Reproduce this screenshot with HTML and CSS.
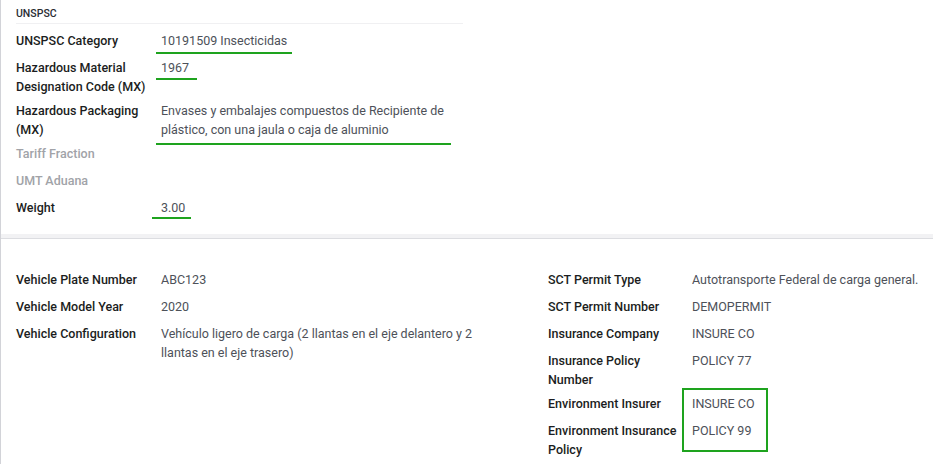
FILE: index.html
```html
<!DOCTYPE html>
<html lang="en">
<head>
<meta charset="utf-8">
<title>UNSPSC</title>
<link rel="stylesheet" href="styles.css">
</head>
<body>
<div class="sheet">
  <section class="panel panel-top">
    <div class="group">
      <div class="group-title">UNSPSC</div>
      <div class="rows">
        <div class="row">
          <div class="label">UNSPSC Category</div>
          <div class="value">10191509 Insecticidas<span class="hl hl-cat"></span></div>
        </div>
        <div class="row">
          <div class="label">Hazardous Material Designation Code (MX)</div>
          <div class="value">1967<span class="hl hl-code"></span></div>
        </div>
        <div class="row">
          <div class="label">Hazardous Packaging (MX)</div>
          <div class="value">Envases y embalajes compuestos de Recipiente de plástico, con una jaula o caja de aluminio<span class="hl hl-pack"></span></div>
        </div>
        <div class="row">
          <div class="label muted">Tariff Fraction</div>
          <div class="value"></div>
        </div>
        <div class="row">
          <div class="label muted">UMT Aduana</div>
          <div class="value"></div>
        </div>
        <div class="row">
          <div class="label">Weight</div>
          <div class="value">3.00<span class="hl hl-weight"></span></div>
        </div>
      </div>
    </div>
  </section>
  <div class="divider"></div>
  <section class="panel panel-bottom">
    <div class="cols">
      <div class="col col-left">
        <div class="row">
          <div class="label">Vehicle Plate Number</div>
          <div class="value">ABC123</div>
        </div>
        <div class="row">
          <div class="label">Vehicle Model Year</div>
          <div class="value">2020</div>
        </div>
        <div class="row">
          <div class="label">Vehicle Configuration</div>
          <div class="value">Vehículo ligero de carga (2 llantas en el eje delantero y 2 llantas en el eje trasero)</div>
        </div>
      </div>
      <div class="col col-right">
        <div class="row">
          <div class="label">SCT Permit Type</div>
          <div class="value nowrap">Autotransporte Federal de carga general.</div>
        </div>
        <div class="row">
          <div class="label">SCT Permit Number</div>
          <div class="value">DEMOPERMIT</div>
        </div>
        <div class="row">
          <div class="label">Insurance Company</div>
          <div class="value">INSURE CO</div>
        </div>
        <div class="row">
          <div class="label">Insurance Policy Number</div>
          <div class="value">POLICY 77</div>
        </div>
        <div class="row">
          <div class="label">Environment Insurer</div>
          <div class="value">INSURE CO</div>
        </div>
        <div class="row">
          <div class="label">Environment Insurance Policy</div>
          <div class="value">POLICY 99</div>
        </div>
        <div class="box"></div>
      </div>
    </div>
  </section>
</div>
</body>
</html>
```

FILE: styles.css
```css
* { box-sizing: border-box; }

html, body {
  margin: 0;
  padding: 0;
  background: #ffffff;
}

body {
  font-family: Roboto, "Liberation Sans", Arial, sans-serif;
  font-size: 12.5px;
  color: #111111;
  width: 933px;
  height: 464px;
  overflow: hidden;
}

.sheet {
  border-left: 1px solid #d2d3d8;
  min-height: 464px;
}

.panel-top {
  padding: 0 0 11px 15px;
}

.group {
  width: 447px;
}

.group-title {
  font-size: 10.5px;
  font-weight: 500;
  color: #2a2d33;
  line-height: 18px;
  padding-top: 5px;
  border-bottom: 1px solid #f0f0f2;
  height: 24px;
}

.rows {
  padding-top: 5px;
}

.row {
  display: grid;
  grid-template-columns: 145px 1fr;
  min-height: 27px;
  padding: 3px 0;
  line-height: 18.5px;
}

.label {
  font-weight: 500;
  color: #1b1d21;
  padding-right: 10px;
}

.label.muted {
  color: #a1a3a8;
}

.value {
  position: relative;
  color: #4d5159;
}

.nowrap {
  white-space: nowrap;
}

.hl {
  position: absolute;
  height: 2px;
  background: #1ea31e;
}

.hl-cat { top: 20px; left: -5px; width: 136px; }
.hl-code { top: 19px; left: -5px; width: 41px; }
.hl-pack { top: 41px; left: -5px; width: 295px; }
.hl-weight { top: 18px; left: -9px; width: 39px; }

.divider {
  height: 5px;
  background: #f2f2f4;
  border-bottom: 1px solid #dcdde1;
}

.panel-bottom {
  padding: 29px 0 0 15px;
}

.cols {
  display: grid;
  grid-template-columns: 470px 1fr;
  column-gap: 62px;
}

.col-right {
  position: relative;
}

.col-right .row {
  grid-template-columns: 144px 1fr;
}

.box {
  position: absolute;
  left: 134px;
  top: 120px;
  width: 86px;
  height: 64px;
  border: 2px solid #1ea31e;
}
```
